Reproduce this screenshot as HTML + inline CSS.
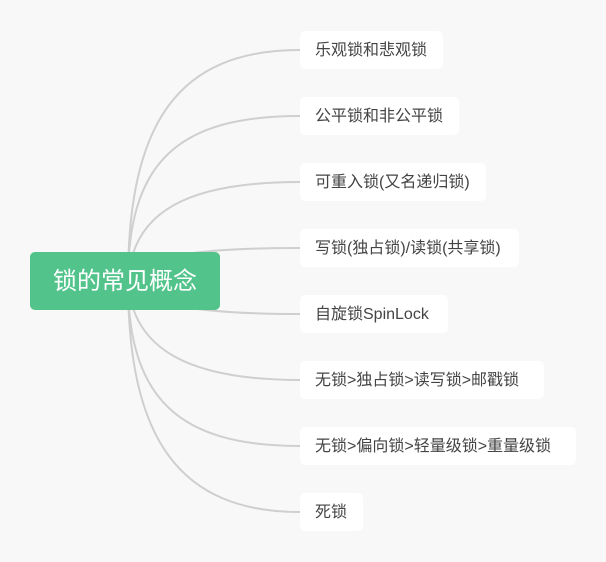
<!DOCTYPE html>
<html><head><meta charset="utf-8"><style>
body{margin:0;width:606px;height:562px;background:#f8f8f8;position:relative;overflow:hidden;font-family:"Liberation Sans","Noto Sans CJK SC",sans-serif}
.r{position:absolute;left:30px;top:252px;width:190px;height:58px;background:#52c48b;border-radius:5px;color:#fff;font-size:24px;line-height:60px;text-align:center}
.c{position:absolute;left:300px;height:38px;background:#fff;border-radius:5px;color:#444;font-size:16px;line-height:40px;padding:0 14px 0 15px;box-sizing:border-box;white-space:nowrap}
svg{position:absolute;left:0;top:0}
</style></head><body>
<svg width="606" height="562" fill="none" stroke="#cfcfcf" stroke-width="2">
<path d="M128,281 C128,120 180,50 300,50"/>
<path d="M128,281 C128,160 180,116 300,116"/>
<path d="M128,281 C132,210 190,182 300,182"/>
<path d="M128,281 C140,255 200,248 300,248"/>
<path d="M128,281 C140,305 200,314 300,314"/>
<path d="M128,281 C132,350 190,380 300,380"/>
<path d="M128,281 C128,400 180,446 300,446"/>
<path d="M128,281 C128,440 180,512 300,512"/>
</svg>
<div class="r">锁的常见概念</div>
<div class="c" style="top:31px;width:143px">乐观锁和悲观锁</div>
<div class="c" style="top:97px;width:159px">公平锁和非公平锁</div>
<div class="c" style="top:163px;width:186px">可重入锁(又名递归锁)</div>
<div class="c" style="top:229px;width:219px">写锁(独占锁)/读锁(共享锁)</div>
<div class="c" style="top:295px;width:148px">自旋锁SpinLock</div>
<div class="c" style="top:361px;width:244px">无锁&gt;独占锁&gt;读写锁&gt;邮戳锁</div>
<div class="c" style="top:427px;width:276px">无锁&gt;偏向锁&gt;轻量级锁&gt;重量级锁</div>
<div class="c" style="top:493px;width:63px">死锁</div>
</body></html>
